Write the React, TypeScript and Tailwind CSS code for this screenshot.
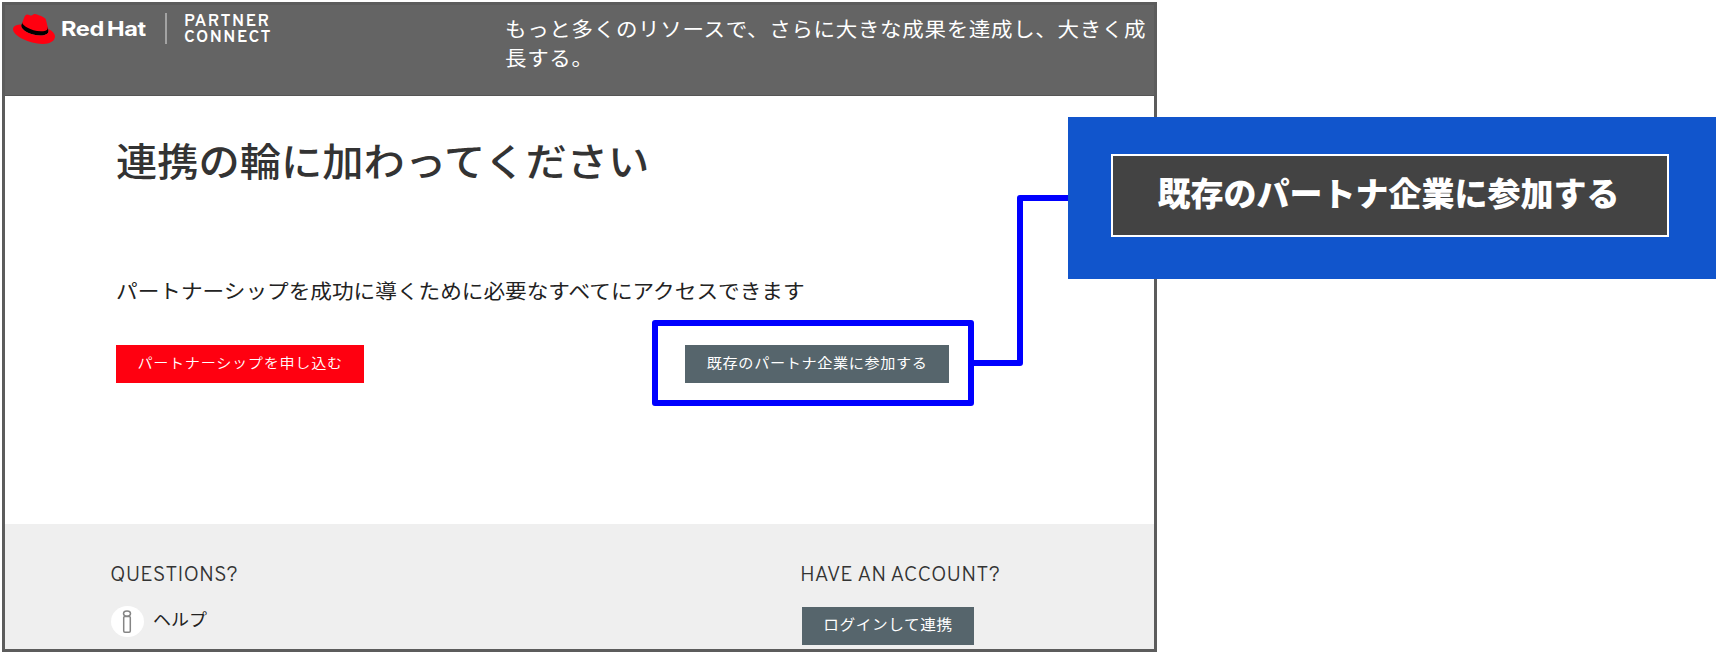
import React from "react";

const jp = "font-['Noto_Sans_CJK_JP',sans-serif]";

function Fedora() {
  return (
    <svg className="mt-[9px] h-[30px] w-[42px] shrink-0" viewBox="0 2.922 24 18.156" preserveAspectRatio="none" aria-hidden="true">
      <path
        fill="#000"
        d="M20.11 11.951c.218 1.032.218 1.14.218 1.277 0 1.765-1.984 2.745-4.593 2.745-5.895.004-11.06-3.451-11.06-5.734a2.326 2.326 0 0 1 .19-.925L5.4 8 19.6 10.6z"
      />
      <path
        fill="#ff0010"
        d="M16.009 13.386c1.577 0 3.86-.326 3.86-2.202a1.765 1.765 0 0 0-.04-.431l-.94-4.08c-.216-.898-.406-1.305-1.982-2.093-1.223-.625-3.888-1.658-4.676-1.658-.733 0-.947.946-1.822.946-.842 0-1.467-.706-2.255-.706-.757 0-1.25.515-1.63 1.576 0 0-1.06 2.99-1.197 3.424a.81.81 0 0 0-.028.245c0 1.162 4.577 4.974 10.71 4.974m4.101-1.435c.218 1.032.218 1.14.218 1.277 0 1.765-1.984 2.745-4.593 2.745-5.895.004-11.06-3.451-11.06-5.734a2.326 2.326 0 0 1 .19-.925C2.746 9.415 0 9.794 0 12.217c0 3.969 9.405 8.861 16.851 8.861 5.71 0 7.149-2.582 7.149-4.62 0-1.605-1.387-3.425-3.887-4.512"
      />
    </svg>
  );
}

function InfoIcon() {
  return (
    <svg className="h-[31px] w-[33px] shrink-0" viewBox="0 0 33 31" fill="none" aria-hidden="true">
      <ellipse cx="16.5" cy="15.5" rx="16.5" ry="15.5" fill="#fff" />
      <ellipse cx="16" cy="7.6" rx="3.5" ry="2.7" stroke="#858585" strokeWidth="1.5" />
      <rect x="12.7" y="10.4" width="6.6" height="15.8" rx="1.2" stroke="#858585" strokeWidth="1.5" />
    </svg>
  );
}

function Button({ label, className }: { label: string; className: string }) {
  return (
    <button className={`flex h-[38px] items-center justify-center whitespace-nowrap pb-[3px] text-white ${className}`}>
      <span className="block scale-x-[1.08]">{label}</span>
    </button>
  );
}

function Header() {
  return (
    <header className="flex h-[91px] items-start border-b border-[#555] bg-[#646464] pl-[8px] text-white">
      <Fedora />
      <span className="ml-[6px] mt-[10px] w-[86px] origin-left scale-x-[1.18] whitespace-nowrap font-['Inter',sans-serif] text-[20px] font-bold leading-[28px] tracking-[-0.3px] [word-spacing:-2px]">
        Red Hat
      </span>
      <div className="ml-[18px] mt-[8px] h-[31px] w-[2px] bg-[#a3a3a3]" />
      <p className="ml-[17px] mt-[10px] w-[90px] origin-left scale-x-[1.06] font-['Overpass','Inter',sans-serif] text-[16px] font-semibold leading-[15.5px] tracking-[1.4px]">
        PARTNER
        <br />
        CONNECT
      </p>
      <p className={`ml-[231px] mt-[9px] w-[606px] origin-left scale-x-[1.074] whitespace-nowrap text-[20px] font-normal leading-[29px] tracking-[0.65px] ${jp}`}>
        もっと多くのリソースで、さらに大きな成果を達成し、大きく成
        <br />
        長する。
      </p>
    </header>
  );
}

const footerHeading =
  "origin-left scale-x-[1.07] font-['Overpass','Inter',sans-serif] text-[20px] font-light leading-[26px] tracking-[0.1px] pt-[1px]";

export default function App() {
  return (
    <div className={`relative h-[654px] w-[1716px] overflow-hidden bg-white pl-[2px] pt-[2px] ${jp}`}>
      <div className="flex h-[650px] w-[1155px] flex-col border-[3px] border-[#5c5c5c] bg-white">
        <Header />
        <main className="h-[428px] pl-[111px]">
          <h1 className="w-[500px] origin-left scale-x-[1.075] whitespace-nowrap pt-[33px] text-[38.4px] font-medium leading-[60px] text-[#333]">
            連携の輪に加わってください
          </h1>
          <p className="w-[640px] origin-left scale-x-[1.082] whitespace-nowrap pt-[87px] text-[20px] leading-[30px] text-[#222]">
            パートナーシップを成功に導くために必要なすべてにアクセスできます
          </p>
          <div className="mt-[39px] flex">
            <Button label="パートナーシップを申し込む" className="w-[248px] bg-[#ff0010] text-[14px] font-[350] tracking-[0.65px]" />
            <Button label="既存のパートナ企業に参加する" className="ml-[321px] w-[264px] bg-[#56656c] pl-px text-[14px] tracking-[0.6px]" />
          </div>
        </main>
        <footer className="flex flex-1 bg-[#efefef] pl-[106px] pt-[38px] text-[#333]">
          <section className="w-[691px]">
            <h2 className={`-ml-px w-[120px] whitespace-nowrap ${footerHeading}`}>QUESTIONS?</h2>
            <div className="mt-[17px] flex">
              <InfoIcon />
              <span className="ml-[9px] text-[16.8px] leading-[27px] text-[#222]">
                <span className="block origin-left scale-x-[1.07]">ヘルプ</span>
              </span>
            </div>
          </section>
          <section>
            <h2 className={`-ml-[2px] w-[190px] whitespace-nowrap ${footerHeading}`}>HAVE AN ACCOUNT?</h2>
            <Button label="ログインして連携" className="mt-[18px] w-[172px] bg-[#56656c] pb-[5px] text-[14.5px] tracking-[0.55px]" />
          </section>
        </footer>
      </div>

      <div className="absolute left-[652px] top-[320px] h-[86px] w-[322px] rounded-[3px] border-[6px] border-[#0000ff]" />
      <svg className="absolute left-[970px] top-[190px] h-[180px] w-[100px]" viewBox="0 0 100 180" fill="none" aria-hidden="true">
        <path d="M2 173H50V8H100" stroke="#0000ff" strokeWidth="6" strokeLinejoin="round" />
      </svg>
      <div className="absolute left-[1068px] top-[117px] h-[162px] w-[648px] bg-[#1155cc] pl-[43px] pt-[37px]">
        <div className="flex h-[83px] w-[558px] items-center justify-center border-2 border-white bg-[#434343] pb-[7px] pr-[3px] text-[33px] font-black leading-[40px] text-white">
          既存のパートナ企業に参加する
        </div>
      </div>
    </div>
  );
}
